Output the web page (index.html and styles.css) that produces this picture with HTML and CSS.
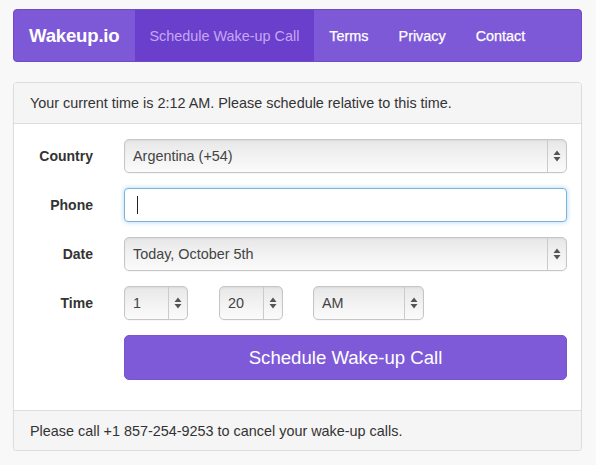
FILE: index.html
```html
<!DOCTYPE html>
<html lang="en">
<head>
<meta charset="utf-8">
<title>Wakeup.io</title>
<link rel="stylesheet" href="styles.css">
</head>
<body>
<div class="container">
  <nav class="navbar">
    <a class="brand" href="#">Wakeup.io</a>
    <a class="nav-link active" href="#">Schedule Wake-up Call</a>
    <a class="nav-link" href="#">Terms</a>
    <a class="nav-link" href="#">Privacy</a>
    <a class="nav-link" href="#">Contact</a>
  </nav>

  <div class="panel">
    <div class="panel-heading">Your current time is 2:12 AM. Please schedule relative to this time.</div>
    <form class="panel-body">
      <label class="label">Country</label>
      <div class="select">
        <span class="select-value">Argentina (+54)</span>
        <span class="select-arrows"><svg width="8" height="12" viewBox="0 0 8 12"><path d="M4 0.5 L7.5 5 H0.5 Z M4 11.5 L7.5 7 H0.5 Z" fill="#555"/></svg></span>
      </div>

      <label class="label">Phone</label>
      <div class="input">
        <span class="caret"></span>
      </div>

      <label class="label">Date</label>
      <div class="select">
        <span class="select-value">Today, October 5th</span>
        <span class="select-arrows"><svg width="8" height="12" viewBox="0 0 8 12"><path d="M4 0.5 L7.5 5 H0.5 Z M4 11.5 L7.5 7 H0.5 Z" fill="#555"/></svg></span>
      </div>

      <label class="label">Time</label>
      <div class="time-row">
        <div class="select hour">
          <span class="select-value">1</span>
          <span class="select-arrows"><svg width="8" height="12" viewBox="0 0 8 12"><path d="M4 0.5 L7.5 5 H0.5 Z M4 11.5 L7.5 7 H0.5 Z" fill="#555"/></svg></span>
        </div>
        <div class="select minute">
          <span class="select-value">20</span>
          <span class="select-arrows"><svg width="8" height="12" viewBox="0 0 8 12"><path d="M4 0.5 L7.5 5 H0.5 Z M4 11.5 L7.5 7 H0.5 Z" fill="#555"/></svg></span>
        </div>
        <div class="select ampm">
          <span class="select-value">AM</span>
          <span class="select-arrows"><svg width="8" height="12" viewBox="0 0 8 12"><path d="M4 0.5 L7.5 5 H0.5 Z M4 11.5 L7.5 7 H0.5 Z" fill="#555"/></svg></span>
        </div>
      </div>

      <span></span>
      <button class="btn" type="button">Schedule Wake-up Call</button>
    </form>
    <div class="panel-footer">Please call +1 857-254-9253 to cancel your wake-up calls.</div>
  </div>
</div>
</body>
</html>
```

FILE: styles.css
```css
* { box-sizing: border-box; }

html, body {
  margin: 0;
  padding: 0;
}

body {
  background: #f8f8f8;
  font-family: "Liberation Sans", Arial, sans-serif;
  font-size: 14.4px;
  color: #333;
}

.container {
  width: 569px;
  margin: 9px 0 0 13px;
}

.navbar {
  display: flex;
  height: 53px;
  background: #7d58d7;
  border: 1px solid #6f4bc8;
  border-radius: 4px;
  overflow: hidden;
}

.brand {
  display: flex;
  align-items: center;
  padding: 0 15px 0 15px;
  font-size: 18.6px;
  font-weight: bold;
  color: #fff;
  text-decoration: none;
  letter-spacing: -0.2px;
}

.nav-link {
  display: flex;
  align-items: center;
  padding: 0 15px;
  color: #fff;
  text-decoration: none;
  font-size: 14.4px;
  -webkit-text-stroke: 0.25px #fff;
}

.nav-link.active {
  background: #6a3fcc;
  color: #c7a7f4;
  -webkit-text-stroke: 0;
}

.panel {
  margin-top: 20px;
  background: #fff;
  border: 1px solid #dcdcdc;
  border-radius: 4px;
  box-shadow: 0 1px 1px rgba(0,0,0,0.05);
  overflow: hidden;
}

.panel-heading,
.panel-footer {
  display: flex;
  align-items: center;
  padding: 0 16px;
  background: #f5f5f5;
  color: #333;
}

.panel-heading {
  height: 41px;
  border-bottom: 1px solid #dddddd;
}

.panel-footer {
  height: 40px;
  border-top: 1px solid #dddddd;
}

.panel-body {
  display: grid;
  grid-template-columns: 64px 1fr;
  column-gap: 31px;
  row-gap: 15px;
  padding: 15px 14px 30px 15px;
  margin: 0;
}

.label {
  display: flex;
  align-items: center;
  justify-content: flex-end;
  font-weight: bold;
  font-size: 14px;
  color: #333;
  height: 34px;
}

.select {
  display: flex;
  height: 34px;
  border: 1px solid #c6c6c6;
  border-radius: 5px;
  background: linear-gradient(#e7e7e7, #f1f1f1 45%, #fbfbfb);
  box-shadow: inset 0 1px 2px rgba(0,0,0,0.06), 0 1px 1px rgba(0,0,0,0.04);
  color: #444;
}

.select-value {
  flex: 1;
  display: flex;
  align-items: center;
  padding-left: 8px;
}

.select-arrows {
  width: 19px;
  display: flex;
  align-items: center;
  justify-content: center;
  border-left: 1px solid #cbcbcb;
}

.input {
  position: relative;
  height: 34px;
  border: 1px solid #7db3db;
  border-radius: 4px;
  background: #fff;
  box-shadow: 0 0 5px rgba(102, 175, 233, 0.55);
}

.caret {
  position: absolute;
  left: 12px;
  top: 7px;
  width: 1px;
  height: 18px;
  background: #222;
}

.time-row {
  display: flex;
  gap: 31px;
}

.select.hour { width: 64px; }
.select.minute { width: 64px; }
.select.ampm { width: 111px; margin-left: -1px; }

.btn {
  height: 45px;
  border: 1px solid #7754d0;
  border-radius: 5px;
  background: #7e5ad8;
  color: #fff;
  font-family: "Liberation Sans", Arial, sans-serif;
  font-size: 18.6px;
  padding: 0;
  cursor: pointer;
}
```
